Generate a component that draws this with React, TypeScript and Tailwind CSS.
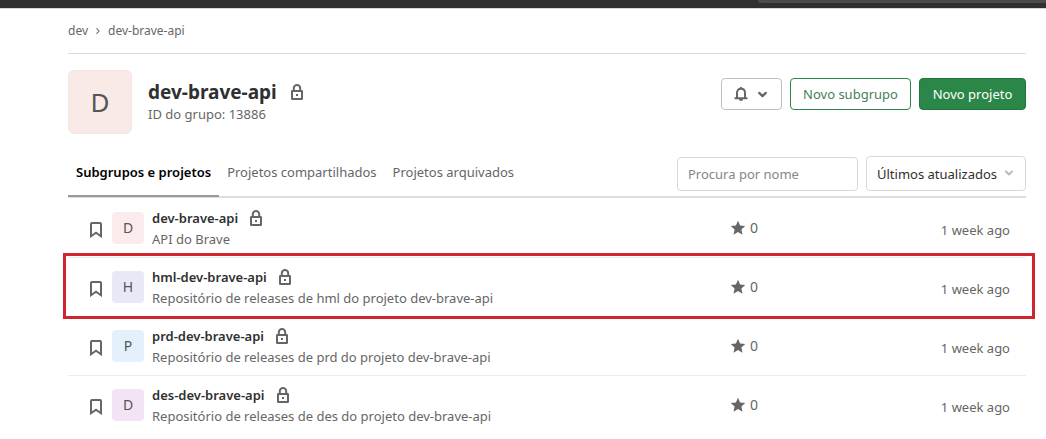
import React from "react";

type Project = {
  name: string;
  description: string;
  initial: string;
  tint: string;
  stars: number;
  updated: string;
  highlighted?: boolean;
};

const projects: Project[] = [
  { name: "dev-brave-api", description: "API do Brave", initial: "D", tint: "bg-[#fcebec]", stars: 0, updated: "1 week ago" },
  {
    name: "hml-dev-brave-api",
    description: "Repositório de releases de hml do projeto dev-brave-api",
    initial: "H",
    tint: "bg-[#e9e8f6]",
    stars: 0,
    updated: "1 week ago",
    highlighted: true,
  },
  {
    name: "prd-dev-brave-api",
    description: "Repositório de releases de prd do projeto dev-brave-api",
    initial: "P",
    tint: "bg-[#e4f0fc]",
    stars: 0,
    updated: "1 week ago",
  },
  {
    name: "des-dev-brave-api",
    description: "Repositório de releases de des do projeto dev-brave-api",
    initial: "D",
    tint: "bg-[#f2e4f4]",
    stars: 0,
    updated: "1 week ago",
  },
];

function LockIcon() {
  return (
    <svg viewBox="0 0 16 16" className="size-4 shrink-0 text-[#666666]" fill="none" stroke="currentColor" strokeWidth="2" aria-hidden="true">
      <rect x="3" y="7" width="10" height="8" rx="0.3" />
      <path d="M4.800 7V4.200a3.200 3.200 0 0 1 6.400 0V7" />
      <rect x="7" y="10" width="2" height="2" fill="currentColor" stroke="none" />
    </svg>
  );
}

function BookmarkIcon() {
  return (
    <svg viewBox="0 0 16 16" className="size-4" fill="none" stroke="currentColor" strokeWidth="2" aria-hidden="true">
      <path d="M4 1h8a1 1 0 0 1 1 1v12.2l-5-3.500-5 3.500V2a1 1 0 0 1 1-1z" />
    </svg>
  );
}

function BellIcon() {
  return (
    <svg viewBox="0 0 16 16" className="size-4" fill="none" stroke="currentColor" aria-hidden="true">
      <path strokeWidth="2" d="M4 12V7C4 4.300 5.500 2.800 8 2.800S12 4.300 12 7v5" />
      <path strokeWidth="2" strokeLinecap="round" d="M2.300 12.300h11.400" />
      <path fill="currentColor" stroke="none" d="M7 1.800a1 1 0 0 1 2 0V3H7zM6 13h4a2 2 0 0 1-4 0z" />
    </svg>
  );
}

function StarIcon() {
  return (
    <svg viewBox="0 0 16 16" className="size-4" fill="currentColor" aria-hidden="true">
      <path d="M8 .8l2.100 4.700 5.100.5-3.800 3.500 1.100 5.300L8 12.100l-4.500 2.700 1.100-5.300L.8 6l5.100-.5z" />
    </svg>
  );
}

function ChevronDown({ className, thin = false }: { className: string; thin?: boolean }) {
  return (
    <svg viewBox="0 0 10 10" className={className} fill="none" stroke="currentColor" strokeWidth={thin ? 1.3 : 2} strokeLinecap="round" strokeLinejoin="round" aria-hidden="true">
      <path d="M2 3.500l3 3 3-3" />
    </svg>
  );
}

function ProjectRow({ project }: { project: Project }) {
  return (
    <li className="relative flex h-[59px] items-center border-b border-[#ececec] pr-4 pl-5 last:border-transparent">
      <button type="button" aria-label={`Marcar ${project.name}`} className="mt-1 p-0 text-[#666666]">
        <BookmarkIcon />
      </button>
      <span className={`ml-2 flex size-8 shrink-0 items-center justify-center rounded text-sm text-[#555555] ${project.tint}`}>
        {project.initial}
      </span>
      <div className="ml-2 min-w-0 grow">
        <div className="flex h-5 items-center gap-2.5">
          <a href="#" className="font-semibold text-[#303030]">{project.name}</a>
          <LockIcon />
        </div>
        <p className="mt-px h-5 leading-5 text-[#666666]">{project.description}</p>
      </div>
      <div className="flex w-[130px] shrink-0 items-center gap-1 text-[#666666]">
        <StarIcon />
        <span className="text-sm leading-4">{project.stars}</span>
      </div>
      <time className="mt-1 w-[150px] shrink-0 text-right text-[#666666]">{project.updated}</time>
      {project.highlighted && (
        <span className="pointer-events-none absolute -top-[5px] -right-[9px] -bottom-[3px] -left-[5px] z-10 border-3 border-[#d0242e]" />
      )}
    </li>
  );
}

export default function App() {
  return (
    <div className="bg-white font-['Noto_Sans',sans-serif] text-[13px] leading-5 text-[#303030]">
      <div className="flex h-[9px] justify-end border-b border-[#d8d8d8] bg-[#303030]">
        <div className="h-[3px] w-[27.5%] rounded-bl bg-[#4c4c4c]" />
      </div>

      <div className="pr-5 pl-[68px]">
        <nav aria-label="Breadcrumb" className="flex h-[45px] items-center gap-1.5 border-b border-[#dbdbdb] text-xs text-[#666666]">
          <a href="#">dev</a>
          <ChevronDown thin className="size-2 -rotate-90" />
          <a href="#">dev-brave-api</a>
        </nav>

        <header className="mt-4 flex items-center">
          <span className="flex size-16 shrink-0 items-center justify-center rounded-md border border-[#f4e6e4] bg-[#f9eae8] text-[26px] text-[#555555]">
            D
          </span>
          <div className="ml-4 grow">
            <div className="flex h-6 items-center gap-3">
              <h1 className="text-[19px] font-bold">dev-brave-api</h1>
              <LockIcon />
            </div>
            <p className="text-[#666666]">ID do grupo: 13886</p>
          </div>
          <div className="mb-4 flex shrink-0 gap-2">
            <button type="button" aria-label="Notificações" className="flex h-8 w-[61px] items-center gap-2 rounded border border-[#bfbfbf] px-[11px] text-[#666666]">
              <BellIcon />
              <ChevronDown className="size-[11px]" />
            </button>
            <button type="button" className="h-8 min-w-[121px] rounded border border-[#2b8747] px-3 text-[#45805a]">Novo subgrupo</button>
            <button type="button" className="h-8 min-w-[107px] rounded border border-[#24753b] bg-[#2b8747] px-3 text-white">Novo projeto</button>
          </div>
        </header>

        <div className="mt-4 flex h-12 border-b-2 border-[#dddddd]">
          <div role="tablist" className="flex grow">
            <button type="button" role="tab" aria-selected="true" className="-mb-px border-b-2 border-[#999999] px-2 pb-px font-semibold text-black">
              Subgrupos e projetos
            </button>
            <button type="button" role="tab" aria-selected="false" className="px-2 pb-0.5 text-[#666666]">Projetos compartilhados</button>
            <button type="button" role="tab" aria-selected="false" className="px-2 pb-0.5 text-[#666666]">Projetos arquivados</button>
          </div>
          <div className="flex shrink-0 items-end gap-2 pb-[5px]">
            <input
              type="text"
              aria-label="Procura por nome"
              placeholder="Procura por nome"
              className="h-[34px] w-[181px] rounded border border-[#d8d8d8] px-2.5 placeholder:text-[#868686]"
            />
            <div className="relative">
              <select aria-label="Ordenar" className="block h-[35px] w-40 appearance-none rounded border border-[#d8d8d8] bg-white px-2.5">
                <option>Últimos atualizados</option>
              </select>
              <ChevronDown className="pointer-events-none absolute top-3 right-3 size-2.5 text-[#bababa]" />
            </div>
          </div>
        </div>

        <ul className="pt-px">
          {projects.map((project) => (
            <ProjectRow key={project.name} project={project} />
          ))}
        </ul>
      </div>
    </div>
  );
}
